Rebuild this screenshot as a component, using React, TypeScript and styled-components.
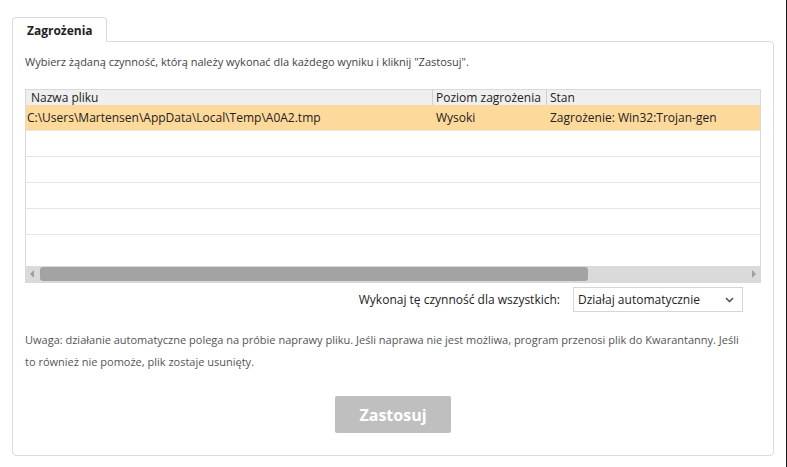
import React from "react";
import styled, { createGlobalStyle } from "styled-components";

const Global = createGlobalStyle`
  html, body { margin: 0; padding: 0; background: #fff; }
  body { font-family: "Open Sans", "Noto Sans", sans-serif; color: #333; }
  * { box-sizing: border-box; }
`;

const Page = styled.div`
  width: 787px;
  height: 467px;
  padding: 17px 0 0 12px;
  border-right: 1px solid #1a1a1a;
  position: relative;
  overflow: hidden;
`;

const Tab = styled.div`
  width: 95px;
  height: 25px;
  border: 1px solid #dcdcdc;
  border-bottom: none;
  border-radius: 4px 4px 0 0;
  background: #fff;
  position: relative;
  z-index: 1;
  margin-bottom: -1px;
  font-size: 12px;
  font-weight: 700;
  color: #222;
  padding: 4px 0 0 14px;
`;

const Panel = styled.div`
  width: 762px;
  height: 415px;
  border: 1px solid #dcdcdc;
  border-radius: 0 4px 4px 4px;
  padding: 12px 0 0 12px;
  display: flex;
  flex-direction: column;
`;

const Intro = styled.div`
  font-size: 11px;
  line-height: 16px;
  color: #444;
`;

const Table = styled.div`
  margin-top: 19px;
  width: 736px;
  height: 194px;
  border: 1px solid #d9d9d9;
  display: flex;
  flex-direction: column;
`;

const cols = "406px 114px 1fr";

const HeaderRow = styled.div`
  display: grid;
  grid-template-columns: ${cols};
  height: 15px;
  background: #efefef;
  font-size: 12px;
  line-height: 15px;
  color: #222;
`;

const HeadCell = styled.div<{ $first?: boolean }>`
  padding-left: ${(p) => (p.$first ? "5px" : "3px")};
  border-left: ${(p) => (p.$first ? "none" : "1px solid #cfcfcf")};
  white-space: nowrap;
`;

const Body = styled.div`
  flex: 1;
  overflow: hidden;
`;

const Row = styled.div<{ $selected?: boolean }>`
  display: grid;
  grid-template-columns: ${cols};
  height: 26px;
  align-items: center;
  border-bottom: 1px solid #e6e6e6;
  background: ${(p) => (p.$selected ? "#fdd99b" : "#fff")};
  font-size: 12px;
  color: #222;
`;

const Cell = styled.div<{ $first?: boolean }>`
  padding-left: ${(p) => (p.$first ? "1px" : "4px")};
  white-space: nowrap;
`;

const ScrollBar = styled.div`
  height: 16px;
  background: #dadada;
  display: flex;
  align-items: center;
  padding: 0 4px;
`;

const Arrow = styled.div<{ $dir: "left" | "right" }>`
  width: 0;
  height: 0;
  border-top: 4px solid transparent;
  border-bottom: 4px solid transparent;
  ${(p) =>
    p.$dir === "left"
      ? "border-right: 4px solid #a0a0a0;"
      : "border-left: 4px solid #a0a0a0;"}
`;

const Track = styled.div`
  flex: 1;
  height: 100%;
  display: flex;
  align-items: center;
  padding: 0 4px 0 6px;
`;

const Thumb = styled.div`
  height: 14px;
  background: #a3a3a3;
  border-radius: 3px;
`;

const ActionRow = styled.div`
  width: 736px;
  display: flex;
  justify-content: flex-end;
  align-items: center;
  gap: 13px;
  margin-top: 4px;
  padding-right: 18px;
  font-size: 12px;
  color: #222;
`;

const Select = styled.div`
  width: 170px;
  height: 25px;
  border: 1px solid #d6d6d6;
  display: flex;
  align-items: center;
  justify-content: space-between;
  padding: 0 8px 0 4px;
  background: #fff;
  color: #222;
`;

const Note = styled.div`
  margin-top: 17px;
  font-size: 11px;
  line-height: 22px;
  color: #555;
  width: 722px;
`;

const ButtonWrap = styled.div`
  display: flex;
  justify-content: center;
  margin-top: 23px;
  padding-right: 12px;
`;

const Button = styled.button`
  width: 116px;
  height: 37px;
  border: none;
  border-radius: 2px;
  background: #bfbfbf;
  color: #fff;
  font-family: "Open Sans", sans-serif;
  font-weight: 700;
  font-size: 16px;
  padding: 0;
`;

export default function App() {
  const emptyRows = [1, 2, 3, 4];
  return (
    <>
      <Global />
      <Page>
        <Tab>Zagrożenia</Tab>
        <Panel>
          <Intro>
            Wybierz żądaną czynność, którą należy wykonać dla każdego wyniku i kliknij "Zastosuj".
          </Intro>
          <Table>
            <HeaderRow>
              <HeadCell $first>Nazwa pliku</HeadCell>
              <HeadCell>Poziom zagrożenia</HeadCell>
              <HeadCell>Stan</HeadCell>
            </HeaderRow>
            <Body>
              <Row $selected>
                <Cell $first>C:\Users\Martensen\AppData\Local\Temp\A0A2.tmp</Cell>
                <Cell>Wysoki</Cell>
                <Cell>Zagrożenie: Win32:Trojan-gen</Cell>
              </Row>
              {emptyRows.map((r) => (
                <Row key={r}>
                  <Cell $first />
                  <Cell />
                  <Cell />
                </Row>
              ))}
            </Body>
            <ScrollBar>
              <Arrow $dir="left" />
              <Track>
                <Thumb style={{ width: "548px" }} />
              </Track>
              <Arrow $dir="right" />
            </ScrollBar>
          </Table>
          <ActionRow>
            <span>Wykonaj tę czynność dla wszystkich:</span>
            <Select>
              <span>Działaj automatycznie</span>
              <svg width="9" height="6" viewBox="0 0 9 6">
                <path d="M1 1 L4.5 4.5 L8 1" stroke="#555" strokeWidth="1.6" fill="none" />
              </svg>
            </Select>
          </ActionRow>
          <Note>
            Uwaga: działanie automatyczne polega na próbie naprawy pliku. Jeśli naprawa nie jest możliwa, program przenosi plik do Kwarantanny. Jeśli to również nie pomoże, plik zostaje usunięty.
          </Note>
          <ButtonWrap>
            <Button>Zastosuj</Button>
          </ButtonWrap>
        </Panel>
      </Page>
    </>
  );
}
